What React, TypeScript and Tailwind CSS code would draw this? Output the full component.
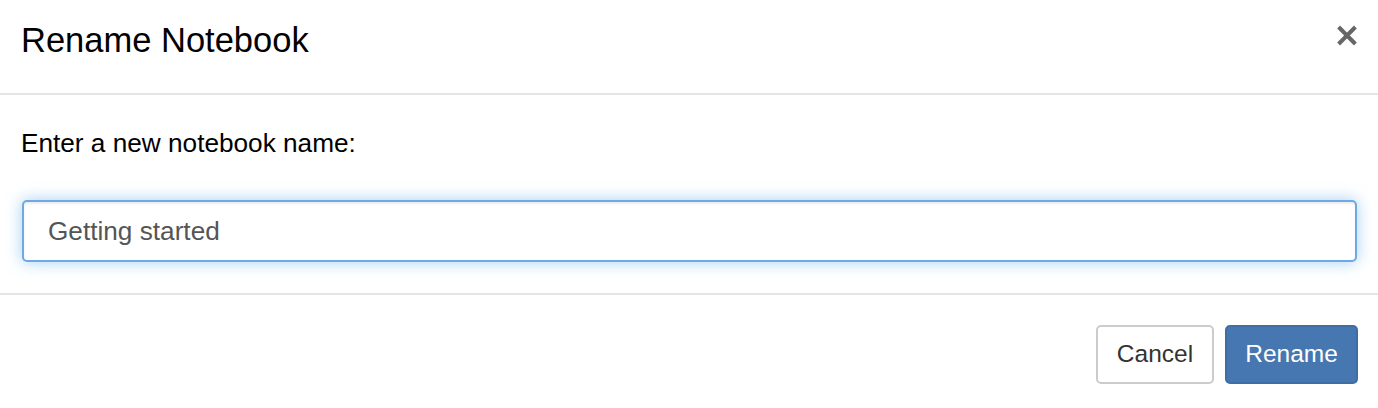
import React from "react";

export default function App() {
  return (
    <div
      className="w-full h-[408px] bg-white flex flex-col text-black"
      style={{ fontFamily: '"Liberation Sans", Arial, Helvetica, sans-serif' }}
    >
      <div className="h-[95px] flex items-start justify-between pl-[21px] pr-[21px] pt-[20px] border-b-2 border-[#e5e5e5]">
        <h4 className="text-[34.5px] leading-[40px] font-normal text-black">Rename Notebook</h4>
        <button className="mt-[5px] w-[20px] h-[21px] flex items-center justify-center" aria-label="Close">
          <svg width="20" height="21" viewBox="0 0 20 21">
            <line x1="1.6" y1="2" x2="18.4" y2="19" stroke="#666" strokeWidth="4" />
            <line x1="18.4" y1="2" x2="1.6" y2="19" stroke="#666" strokeWidth="4" />
          </svg>
        </button>
      </div>
      <div className="h-[200px] pl-[20px] pr-[20px] pt-[30px] border-b-2 border-[#e5e5e5] flex flex-col">
        <p className="text-[26.2px] leading-[36px] pl-px">Enter a new notebook name:</p>
        <div className="pl-[2px] pr-px mt-[39px]">
          <input
            defaultValue="Getting started"
            className="w-full h-[62px] border-2 border-[#6ea8e6] rounded-[5px] pl-[24px] pr-[23px] text-[26.2px] text-[#555] bg-white outline-none shadow-[0_0_16px_rgba(102,175,233,0.6),inset_0_2px_2px_rgba(0,0,0,0.075)]"
          />
        </div>
      </div>
      <div className="flex justify-end items-start gap-[11px] pt-[30px] pr-[20px]">
        <button className="h-[59px] w-[118px] border-2 border-[#cccccc] rounded-[5px] bg-white text-[#333] text-[24.5px]">
          Cancel
        </button>
        <button className="h-[59px] w-[133px] border-2 border-[#3f6ea4] rounded-[5px] bg-[#4677b0] text-white text-[24.5px]">
          Rename
        </button>
      </div>
    </div>
  );
}
